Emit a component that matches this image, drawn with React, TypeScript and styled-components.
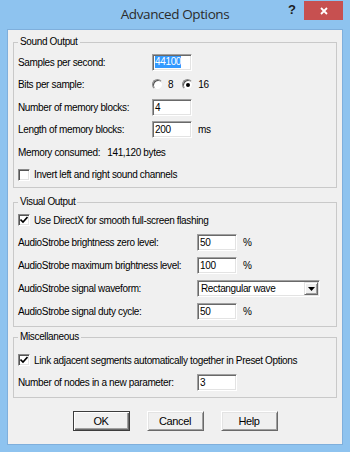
import React from "react";
import styled, { createGlobalStyle } from "styled-components";

const GlobalStyle = createGlobalStyle`
  html, body {
    margin: 0;
    padding: 0;
  }
  body {
    background: #8ec3ef;
    font-family: "Liberation Sans", Arial, sans-serif;
    font-size: 10px;
    letter-spacing: -0.35px;
    color: #000;
  }
`;

const Window = styled.div`
  width: 350px;
  height: 452px;
  box-sizing: border-box;
  background: #8ec3ef;
  padding: 0 7px 7px;
  display: flex;
  flex-direction: column;
`;

const TitleBar = styled.div`
  height: 29px;
  flex: none;
  display: grid;
  grid-template-columns: 1fr auto 1fr;
  align-items: start;
`;

const Title = styled.div`
  grid-column: 2;
  line-height: 28px;
  font-family: "Open Sans", "Noto Sans", sans-serif;
  font-size: 13.5px;
  letter-spacing: -0.4px;
  color: #2b2b2b;
`;

const Controls = styled.div`
  grid-column: 3;
  display: flex;
  justify-content: flex-end;
`;

const HelpButton = styled.div`
  width: 24px;
  height: 20px;
  line-height: 20px;
  text-align: center;
  font-weight: bold;
  font-size: 13px;
  letter-spacing: 0;
  color: #1c1c1c;
`;

const CloseButton = styled.div`
  width: 39px;
  height: 19px;
  margin-top: 1px;
  background: #c75050;
  display: flex;
  align-items: center;
  justify-content: center;
`;

const Client = styled.div`
  flex: 1;
  box-sizing: border-box;
  background: #f0f0f0;
  border: 1px solid #7fafdc;
  padding: 0 5px;
  display: flex;
  flex-direction: column;
`;

const Group = styled.fieldset<{ $top: number; $pt: number; $pb: number }>`
  margin: ${(p) => p.$top}px 0 0;
  padding: ${(p) => p.$pt}px 4px ${(p) => p.$pb}px;
  border: 1px solid #c9c9c9;
  min-width: 0;
  display: flex;
  flex-direction: column;
`;

const Legend = styled.legend`
  padding: 0 2px;
  line-height: 14px;
`;

const Row = styled.div<{ $h: number }>`
  height: ${(p) => p.$h}px;
  display: flex;
  align-items: center;
  white-space: nowrap;
`;

const Label = styled.span<{ $w?: number }>`
  width: ${(p) => (p.$w ? `${p.$w}px` : "auto")};
  flex: none;
`;

const Unit = styled.span`
  margin-left: 6px;
`;

const Value = styled.span`
  margin-left: 7px;
`;

const Field = styled.div<{ $w?: number }>`
  width: ${(p) => p.$w ?? 40}px;
  height: 17px;
  box-sizing: border-box;
  background: #fff;
  border: 1px solid;
  border-color: #a0a0a0 #fff #fff #a0a0a0;
  box-shadow: inset 1px 1px #696969, inset -1px -1px #e3e3e3;
  padding: 0 0 0 2px;
  line-height: 15px;
  display: flex;
  align-items: center;
`;

const Selected = styled.span`
  background: #3399ff;
  color: #fff;
  line-height: 12px;
`;

const Radio = styled.span<{ $on?: boolean }>`
  width: 11px;
  height: 11px;
  box-sizing: border-box;
  border-radius: 50%;
  border: 1px solid;
  border-color: #8a8a8a #eee #eee #8a8a8a;
  background: #fff;
  box-shadow: inset 1px 1px #555;
  position: relative;
  flex: none;
  &::after {
    content: "";
    display: ${(p) => (p.$on ? "block" : "none")};
    position: absolute;
    left: 3px;
    top: 3px;
    width: 4px;
    height: 4px;
    border-radius: 50%;
    background: #000;
  }
`;

const RadioText = styled.span<{ $gap: number }>`
  margin-left: 5px;
  margin-right: ${(p) => p.$gap}px;
`;

const Check = styled.span`
  width: 12px;
  height: 12px;
  box-sizing: border-box;
  background: #fff;
  border: 1px solid;
  border-color: #8a8a8a #fff #fff #8a8a8a;
  box-shadow: inset 1px 1px #555, inset -1px -1px #e3e3e3;
  display: flex;
  align-items: center;
  justify-content: center;
  flex: none;
`;

const CheckText = styled.span`
  margin-left: 4px;
`;

const Select = styled(Field)`
  padding: 0 1px 0 3px;
  justify-content: space-between;
`;

const DropButton = styled.span`
  width: 14px;
  height: 13px;
  box-sizing: border-box;
  background: #f0f0f0;
  border: 1px solid;
  border-color: #e3e3e3 #696969 #696969 #e3e3e3;
  box-shadow: inset 1px 1px #fff, inset -1px -1px #a0a0a0;
  display: flex;
  align-items: center;
  justify-content: center;
`;

const ButtonRow = styled.div`
  margin-top: 13px;
  display: flex;
  justify-content: center;
  gap: 17px;
`;

const Button = styled.div<{ $default?: boolean }>`
  width: 57px;
  height: 20px;
  box-sizing: border-box;
  background: #f0f0f0;
  border: 1px solid;
  border-color: ${(p) => (p.$default ? "#3c3c3c" : "#fff #696969 #696969 #fff")};
  box-shadow: ${(p) =>
    p.$default
      ? "inset 1px 1px #fff, inset -1px -1px #696969, inset -2px -2px #a0a0a0"
      : "inset 1px 1px #e3e3e3, inset -1px -1px #a0a0a0"};
  display: flex;
  align-items: center;
  justify-content: center;
  font-size: 11px;
`;

const CheckMark = () => (
  <svg width="8" height="8" viewBox="0 0 8 8">
    <path d="M0.5 3.5 L3 6 L7.5 1" fill="none" stroke="#000" strokeWidth="1.6" />
  </svg>
);

const CloseIcon = () => (
  <svg width="8" height="8" viewBox="0 0 8 8">
    <path d="M1 1 L7 7 M7 1 L1 7" stroke="#fff" strokeWidth="1.8" />
  </svg>
);

const DownArrow = () => (
  <svg width="7" height="4" viewBox="0 0 7 4">
    <path d="M0 0 H7 L3.5 4 Z" fill="#000" />
  </svg>
);

const visualRows = [
  { label: "AudioStrobe brightness zero level:", value: "50" },
  { label: "AudioStrobe maximum brightness level:", value: "100" },
];

export default function App() {
  return (
    <>
      <GlobalStyle />
      <Window>
        <TitleBar>
          <Title>Advanced Options</Title>
          <Controls>
            <HelpButton>?</HelpButton>
            <CloseButton>
              <CloseIcon />
            </CloseButton>
          </Controls>
        </TitleBar>
        <Client>
          <Group $top={5} $pt={2} $pb={2}>
            <Legend>Sound Output</Legend>
            <Row $h={22}>
              <Label $w={134}>Samples per second:</Label>
              <Field>
                <Selected>44100</Selected>
              </Field>
            </Row>
            <Row $h={23}>
              <Label $w={134}>Bits per sample:</Label>
              <Radio />
              <RadioText $gap={9}>8</RadioText>
              <Radio $on />
              <RadioText $gap={0}>16</RadioText>
            </Row>
            <Row $h={22}>
              <Label $w={134}>Number of memory blocks:</Label>
              <Field>4</Field>
            </Row>
            <Row $h={22}>
              <Label $w={134}>Length of memory blocks:</Label>
              <Field>200</Field>
              <Unit>ms</Unit>
            </Row>
            <Row $h={24}>
              <Label>Memory consumed:</Label>
              <Value>141,120 bytes</Value>
            </Row>
            <Row $h={21}>
              <Check />
              <CheckText>Invert left and right sound channels</CheckText>
            </Row>
          </Group>

          <Group $top={7} $pt={0} $pb={3}>
            <Legend>Visual Output</Legend>
            <Row $h={22}>
              <Check>
                <CheckMark />
              </Check>
              <CheckText>Use DirectX for smooth full-screen flashing</CheckText>
            </Row>
            {visualRows.map((r) => (
              <Row $h={23} key={r.label}>
                <Label $w={179}>{r.label}</Label>
                <Field>{r.value}</Field>
                <Unit>%</Unit>
              </Row>
            ))}
            <Row $h={23}>
              <Label $w={179}>AudioStrobe signal waveform:</Label>
              <Select $w={123}>
                <span>Rectangular wave</span>
                <DropButton>
                  <DownArrow />
                </DropButton>
              </Select>
            </Row>
            <Row $h={23}>
              <Label $w={179}>AudioStrobe signal duty cycle:</Label>
              <Field>50</Field>
              <Unit>%</Unit>
            </Row>
          </Group>

          <Group $top={3} $pt={5} $pb={3}>
            <Legend>Miscellaneous</Legend>
            <Row $h={22}>
              <Check>
                <CheckMark />
              </Check>
              <CheckText>Link adjacent segments automatically together in Preset Options</CheckText>
            </Row>
            <Row $h={23}>
              <Label $w={179}>Number of nodes in a new parameter:</Label>
              <Field>3</Field>
            </Row>
          </Group>

          <ButtonRow>
            <Button $default>OK</Button>
            <Button>Cancel</Button>
            <Button>Help</Button>
          </ButtonRow>
        </Client>
      </Window>
    </>
  );
}
